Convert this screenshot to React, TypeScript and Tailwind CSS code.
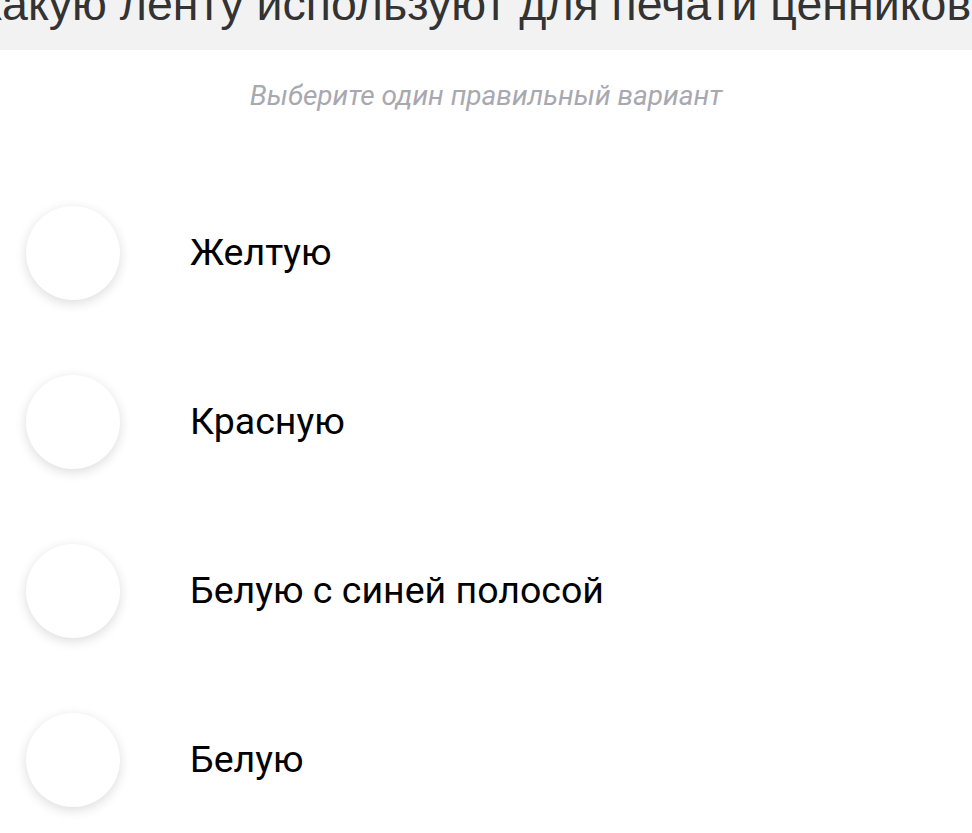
import React from 'react';

const answers = ['Желтую', 'Красную', 'Белую с синей полосой', 'Белую'];

const App = () => {
  return (
    <div className="min-h-screen bg-white overflow-hidden" style={{ fontFamily: 'Roboto, "Noto Sans", sans-serif' }}>
      {/* Question header */}
      <div className="h-[50px] bg-[#f2f2f2] flex justify-center overflow-hidden">
        <h1 className="shrink-0 whitespace-nowrap mt-[-19px] text-[46.5px] leading-none font-normal text-[#333333] font-['Liberation_Sans',Arial,sans-serif]">
          Какую ленту используют для печати ценников?
        </h1>
      </div>

      <p className="mt-[32px] text-center text-[28px] leading-none italic text-[#a8a8b0]">
        Выберите один правильный вариант
      </p>

      {/* Answer options */}
      <div className="mt-[58px] flex flex-col">
        {answers.map((answer) => (
          <div key={answer} className="h-[169px] flex items-center">
            <div className="ml-[26px] w-[94px] h-[94px] rounded-full bg-white shadow-[0_3px_12px_rgba(0,0,0,0.14)] shrink-0" />
            <span className="ml-[70px] text-[37.5px] leading-none text-black">{answer}</span>
          </div>
        ))}
      </div>
    </div>
  );
};

export default App;
